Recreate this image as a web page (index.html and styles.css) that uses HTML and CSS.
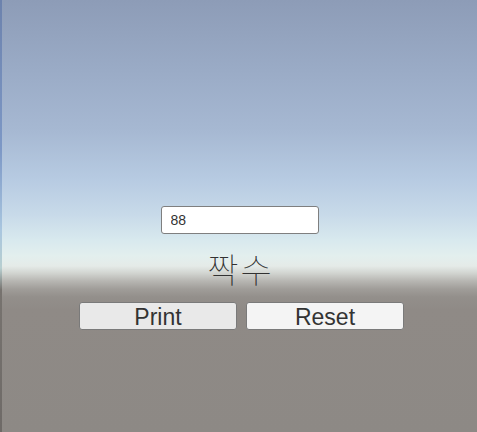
FILE: index.html
```html
<!DOCTYPE html>
<html lang="ko">
<head>
    <meta charset="UTF-8">
    <meta name="viewport" content="width=device-width, initial-scale=1.0">
    <title>Even Odd</title>
    <link rel="stylesheet" href="styles.css">
</head>
<body>

    <div id="screen">
        <div class="edge"></div>

        <div class="stage">
            <div class="field">
                <input type="text" id="numberInput" value="88">
            </div>

            <div id="result" class="result">짝수</div>

            <div class="buttons">
                <button class="btn btn-print">Print</button>
                <button class="btn">Reset</button>
            </div>
        </div>
    </div>

</body>
</html>
```

FILE: styles.css
```css
body {
    margin: 0;
    padding: 0;
    font-family: "Liberation Sans", Arial, sans-serif;
    overflow: hidden;
}
#screen {
    display: flex;
    width: 477px;
    height: 432px;
}
.edge {
    width: 2px;
    background: linear-gradient(to bottom, #6c82ad 0px, #7d98c6 150px, #a9c6df 230px, #b8cfd0 268px, #77736f 290px, #6e6a67 432px);
}
.stage {
    flex: 1;
    display: flex;
    flex-direction: column;
    align-items: center;
    padding-top: 206px;
    background: linear-gradient(to bottom,
        #8d9cb7 0px,
        #9aabc6 70px,
        #a6b8d2 130px,
        #b7cbe2 180px,
        #c8dae9 215px,
        #d8e9ee 240px,
        #e3efee 256px,
        #e5ebe8 266px,
        #d2d5d1 273px,
        #b7b6b2 281px,
        #a09d99 289px,
        #938f8b 297px,
        #8f8a86 310px,
        #8d8985 432px);
}
.field input {
    display: block;
    width: 158px;
    height: 28px;
    box-sizing: border-box;
    margin: 0;
    padding: 0 9px;
    border: 1px solid #7f7f7f;
    border-radius: 3px;
    background-color: #fff;
    font-family: "Liberation Sans", Arial, sans-serif;
    font-size: 14px;
    color: #333;
    outline: none;
}
.result {
    margin-top: 13px;
    height: 55px;
    line-height: 44px;
    font-family: "Noto Sans CJK KR", sans-serif;
    font-weight: 100;
    font-size: 34px;
    letter-spacing: 2px;
    padding-left: 2px;
    color: #323232;
}
.buttons {
    display: flex;
    gap: 9px;
    margin-left: 4px;
}
.btn {
    width: 158px;
    height: 28px;
    box-sizing: border-box;
    padding: 2px 0 0;
    border: 1px solid #7a7a7a;
    border-radius: 3px;
    background-color: #f4f4f4;
    font-family: "Liberation Sans", Arial, sans-serif;
    font-size: 23px;
    line-height: 24px;
    color: #333;
}
.btn-print {
    background-color: #e9e9e9;
}
```
